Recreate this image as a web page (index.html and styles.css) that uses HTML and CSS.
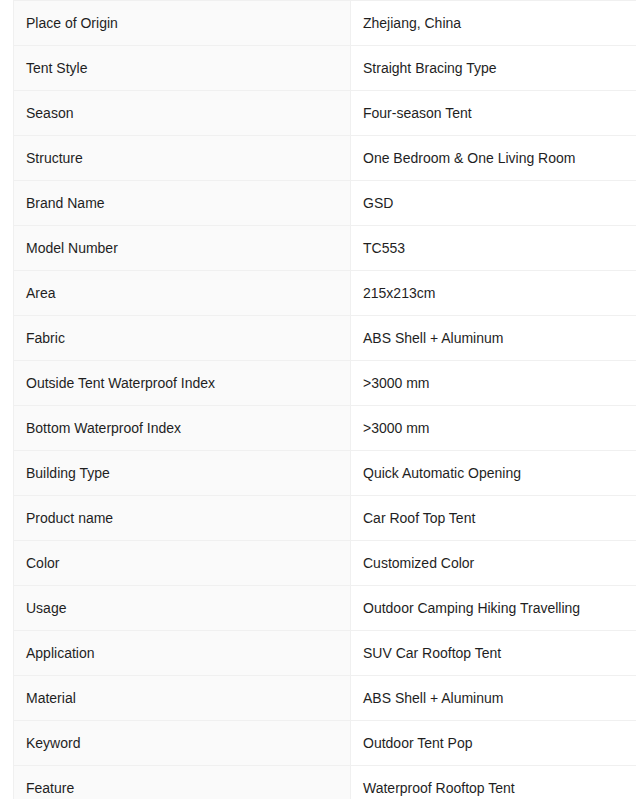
FILE: index.html
```html
<!DOCTYPE html>
<html>
<head>
<meta charset="utf-8">
<link rel="stylesheet" href="styles.css">
</head>
<body>
<div class="wrap">
<table class="specs">
<tbody>
<tr><td class="k">Place of Origin</td><td class="v">Zhejiang, China</td></tr>
<tr><td class="k">Tent Style</td><td class="v">Straight Bracing Type</td></tr>
<tr><td class="k">Season</td><td class="v">Four-season Tent</td></tr>
<tr><td class="k">Structure</td><td class="v">One Bedroom &amp; One Living Room</td></tr>
<tr><td class="k">Brand Name</td><td class="v">GSD</td></tr>
<tr><td class="k">Model Number</td><td class="v">TC553</td></tr>
<tr><td class="k">Area</td><td class="v">215x213cm</td></tr>
<tr><td class="k">Fabric</td><td class="v">ABS Shell + Aluminum</td></tr>
<tr><td class="k">Outside Tent Waterproof Index</td><td class="v">&gt;3000 mm</td></tr>
<tr><td class="k">Bottom Waterproof Index</td><td class="v">&gt;3000 mm</td></tr>
<tr><td class="k">Building Type</td><td class="v">Quick Automatic Opening</td></tr>
<tr><td class="k">Product name</td><td class="v">Car Roof Top Tent</td></tr>
<tr><td class="k">Color</td><td class="v">Customized Color</td></tr>
<tr><td class="k">Usage</td><td class="v">Outdoor Camping Hiking Travelling</td></tr>
<tr><td class="k">Application</td><td class="v">SUV Car Rooftop Tent</td></tr>
<tr><td class="k">Material</td><td class="v">ABS Shell + Aluminum</td></tr>
<tr><td class="k">Keyword</td><td class="v">Outdoor Tent Pop</td></tr>
<tr><td class="k">Feature</td><td class="v">Waterproof Rooftop Tent</td></tr>
</tbody>
</table>
</div>
</body>
</html>
```
FILE: styles.css
```css
html, body {
  margin: 0;
  padding: 0;
  background: #ffffff;
  overflow: hidden;
}
.wrap {
  padding-left: 13px;
}
.specs {
  border-collapse: collapse;
  table-layout: fixed;
  width: 623px;
  font-family: "Liberation Sans", Arial, sans-serif;
  font-size: 14px;
  line-height: 20px;
  color: #1f1f1f;
}
.specs td {
  border: 1px solid #f0f0f0;
  padding: 12px 12px;
  vertical-align: middle;
  white-space: nowrap;
}
.specs td.k {
  width: 312px;
  background: #fafafa;
}
.specs td.v {
  background: #ffffff;
  border-right: none;
}
```
